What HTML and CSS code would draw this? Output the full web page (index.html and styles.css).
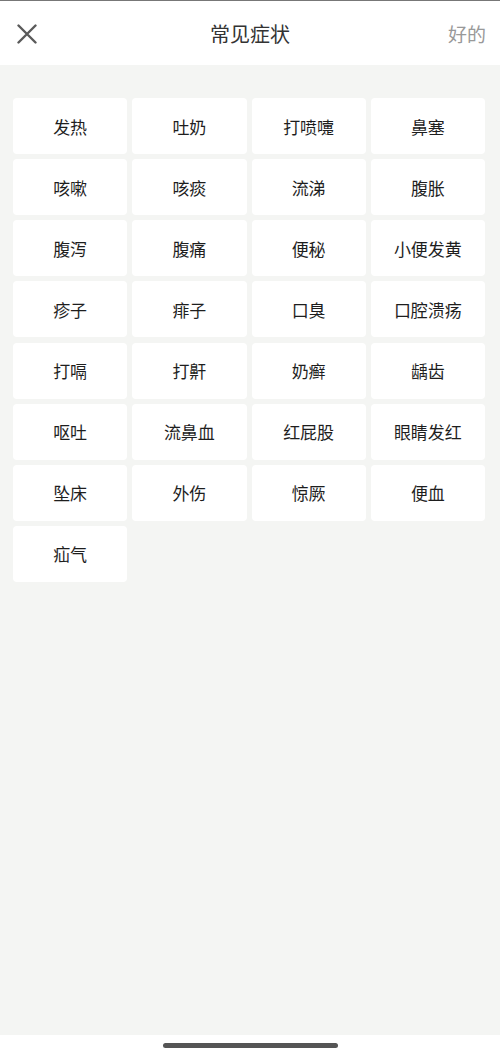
FILE: index.html
```html
<!DOCTYPE html>
<html lang="zh">

<head>
  <meta charset="UTF-8" />
  <meta name="viewport" content="width=device-width, initial-scale=1.0" />
  <title>常见症状</title>
  <link rel="stylesheet" href="styles.css">
</head>

<body>
  <div class="page">
    <!-- Header -->
    <div class="header">
      <span class="close">
        <svg width="20" height="20" viewBox="0 0 20 20">
          <path d="M1.5 1.5 L18.5 18.5 M18.5 1.5 L1.5 18.5" stroke="#5a5a5a" stroke-width="2.4" stroke-linecap="round" fill="none" />
        </svg>
      </span>
      <h1 class="title">常见症状</h1>
      <span class="ok">好的</span>
    </div>

    <div class="content">
      <div class="grid">
        <div class="tag">发热</div>
        <div class="tag">吐奶</div>
        <div class="tag">打喷嚏</div>
        <div class="tag">鼻塞</div>
        <div class="tag">咳嗽</div>
        <div class="tag">咳痰</div>
        <div class="tag">流涕</div>
        <div class="tag">腹胀</div>
        <div class="tag">腹泻</div>
        <div class="tag">腹痛</div>
        <div class="tag">便秘</div>
        <div class="tag">小便发黄</div>
        <div class="tag">疹子</div>
        <div class="tag">痱子</div>
        <div class="tag">口臭</div>
        <div class="tag">口腔溃疡</div>
        <div class="tag">打嗝</div>
        <div class="tag">打鼾</div>
        <div class="tag">奶癣</div>
        <div class="tag">龋齿</div>
        <div class="tag">呕吐</div>
        <div class="tag">流鼻血</div>
        <div class="tag">红屁股</div>
        <div class="tag">眼睛发红</div>
        <div class="tag">坠床</div>
        <div class="tag">外伤</div>
        <div class="tag">惊厥</div>
        <div class="tag">便血</div>
        <div class="tag">疝气</div>
      </div>
    </div>

    <div class="home-bar">
      <span class="indicator"></span>
    </div>
  </div>
</body>

</html>
```

FILE: styles.css
```css
body {
  font-family: "Noto Sans CJK SC", "Noto Sans", sans-serif;
  margin: 0;
  padding: 0;
  background: #fff;
}

.page {
  display: flex;
  flex-direction: column;
  height: 1056px;
  border-top: 1px solid #777;
  box-sizing: border-box;
}

.header {
  display: flex;
  align-items: center;
  justify-content: space-between;
  height: 64px;
  padding: 0 14px 0 17px;
  background: #fff;
  position: relative;
}

.close {
  display: flex;
  width: 20px;
  height: 20px;
  margin-top: 2px;
}

.title {
  position: absolute;
  left: 0;
  right: 0;
  text-align: center;
  margin: 0;
  font-size: 20px;
  font-weight: normal;
  color: #333;
  pointer-events: none;
}

.ok {
  font-size: 19px;
  color: #999;
}

.content {
  flex: 1;
  background: #f4f5f3;
  padding: 33px 15px 0 13px;
}

.grid {
  display: grid;
  grid-template-columns: repeat(4, 1fr);
  column-gap: 5px;
  row-gap: 5.15px;
}

.tag {
  height: 56px;
  display: flex;
  align-items: center;
  justify-content: center;
  background: #fff;
  border-radius: 4px;
  font-size: 17px;
  color: #1e1e1e;
}

.home-bar {
  height: 21px;
  display: flex;
  justify-content: center;
  padding-top: 8px;
  box-sizing: border-box;
  background: #fff;
}

.indicator {
  width: 175px;
  height: 5px;
  border-radius: 3px;
  background: #555;
}
```
